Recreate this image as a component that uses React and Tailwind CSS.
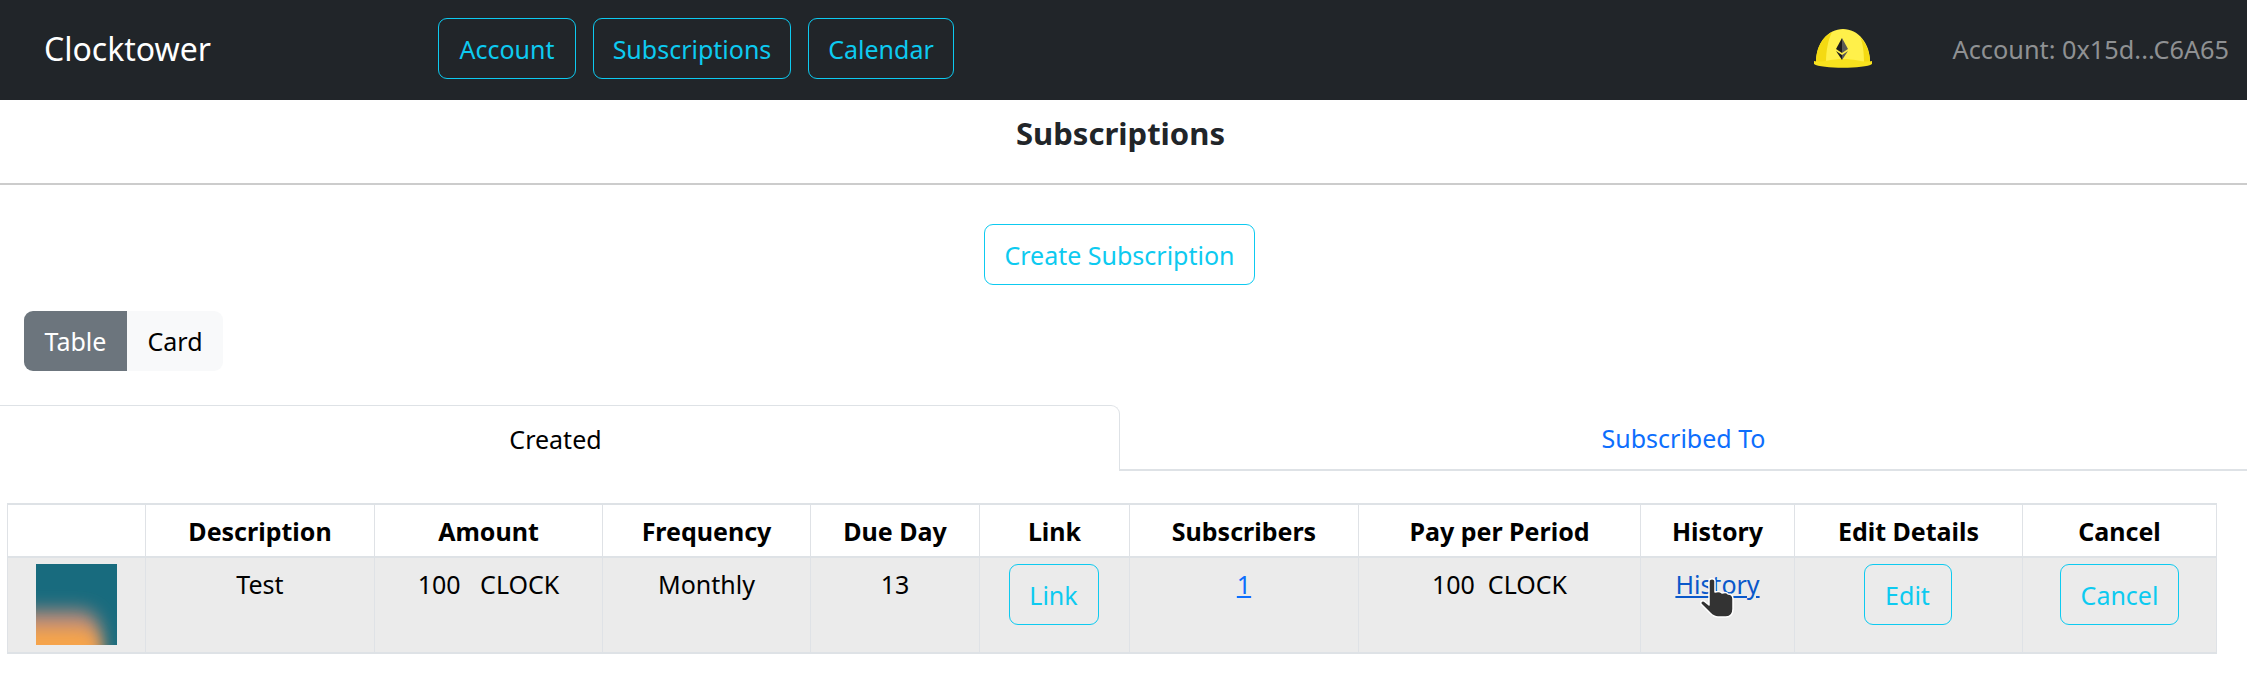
const cyanBtn = 'inline-flex items-center justify-center h-[61px] rounded-[9px] border border-[#0dcaf0] text-[#0dcaf0] text-[25px]';
const cell = 'border-x border-y-2 border-x-[#dfe2e6] border-y-[#dee2e6]';
const textCell = cell + ' pt-[8px]';
const btnCell = cell + ' pt-[6px]';

function Helmet() {
  return (
    <svg width="60" height="40" viewBox="0 0 60 40" className="shrink-0">
      <path d="M3 33 C3 14 15 0 30 0 C45 0 57 14 57 33 Z" fill="#fff04a" />
      <path d="M3 33 C3 19 9 8 19 3 C15 11 13 22 13 33 Z" fill="#f4da12" />
      <path d="M51 33 C51 24 50 14 47 8 C53 14 57 23 57 33 Z" fill="#f4da12" />
      <path d="M1 32 C10 34 16 30 30 30 C44 30 50 34 59 32 L59 35 C52 40 8 40 1 35 Z" fill="#f8e21e" />
      <path d="M29 9 L23 20 L29 24 Z" fill="#1c1c1c" />
      <path d="M29 9 L35 20 L29 24 Z" fill="#5b5b55" />
      <path d="M23 22 L29 26 L29 31 Z" fill="#1c1c1c" />
      <path d="M35 22 L29 26 L29 31 Z" fill="#5b5b55" />
    </svg>
  );
}

function Thumb() {
  return (
    <svg width="81" height="81" viewBox="0 0 81 81" className="block ml-[28px]">
      <defs>
        <filter id="soft" x="-40%" y="-40%" width="180%" height="180%">
          <feGaussianBlur stdDeviation="9" />
        </filter>
        <filter id="softer" x="-40%" y="-40%" width="180%" height="180%">
          <feGaussianBlur stdDeviation="8" />
        </filter>
        <clipPath id="box"><rect width="81" height="81" /></clipPath>
      </defs>
      <g clipPath="url(#box)">
        <rect width="81" height="81" fill="#186b7e" />
        <rect x="-30" y="46" width="94" height="60" rx="20" fill="#b98a7c" filter="url(#soft)" />
        <rect x="-30" y="64" width="94" height="45" rx="18" fill="#f6a44c" filter="url(#softer)" />
      </g>
    </svg>
  );
}

function HandCursor() {
  return (
    <svg width="36" height="42" viewBox="0 0 36 42" className="absolute left-[58px] top-[11px]">
      <path d="M10 4 C10 1 16 1 16 4 L16 15 C19 14 21 14 23 16 C26 15 28 15 29 17 C32 17 34 19 34 22 L34 32 C34 37 31 40 27 40 L19 40 C15 40 13 38 11 36 L2 27 C1 25 3 23 5 24 L10 28 Z" fill="#333" stroke="#fff" strokeWidth="1.5" strokeLinejoin="round" />
    </svg>
  );
}

const headers = ['', 'Description', 'Amount', 'Frequency', 'Due Day', 'Link', 'Subscribers', 'Pay per Period', 'History', 'Edit Details', 'Cancel'];
const widths = [138, 229, 228, 208, 169, 150, 229, 282, 154, 228, 194];

export default function App() {
  return (
    <div className="bg-white min-h-[686px] overflow-hidden text-black font-['Noto_Sans',sans-serif] text-[25px] leading-[36px]">
      <nav className="h-[100px] pb-[3px] bg-[#212529] flex items-center">
        <a className="w-[438px] pl-[44px] text-[32px] text-white">Clocktower</a>
        <div className="flex gap-[17px]">
          <a className={cyanBtn + ' w-[138px]'}>Account</a>
          <a className={cyanBtn + ' w-[198px]'}>Subscriptions</a>
          <a className={cyanBtn + ' w-[146px]'}>Calendar</a>
        </div>
        <div className="ml-auto flex items-center gap-[80px] pr-[18px]">
          <Helmet />
          <span className="text-[25.3px] text-[#8f9193]">Account: 0x15d...C6A65</span>
        </div>
      </nav>

      <h1 className="h-[85px] pt-[15px] pr-[6px] text-center text-[31px] font-bold text-[#212529] border-b-2 border-[#cccccc]">Subscriptions</h1>

      <div className="flex justify-center pt-[39px] pr-[8px]">
        <button className={cyanBtn + ' w-[271px]'}>Create Subscription</button>
      </div>

      <div className="flex pl-[24px] pt-[26px]">
        <button className="w-[103px] h-[60px] bg-[#6c757d] text-white rounded-l-[9px]">Table</button>
        <button className="w-[96px] h-[60px] bg-[#f8f9fa] text-black rounded-r-[9px]">Card</button>
      </div>

      <div className="flex mt-[34px] h-[66px]">
        <div className="w-[1120px] shrink-0 pr-[8px] flex items-center justify-center border border-l-0 border-b-0 border-[#dee2e6] rounded-tr-[9px]">Created</div>
        <div className="flex-1 flex items-center justify-center text-[#0d6efd] border-b-2 border-[#dee2e6] mt-[1px]">Subscribed To</div>
      </div>

      <div className="pl-[7px] pt-[32px]">
        <table className="table-fixed border-collapse w-[2209px]">
          <colgroup>
            {widths.map((w, i) => <col key={i} style={{ width: w }} />)}
          </colgroup>
          <thead>
            <tr className="h-[53px]">
              {headers.map((h, i) => (
                <th key={i} className={cell + ' font-bold text-center p-0'}>{h}</th>
              ))}
            </tr>
          </thead>
          <tbody>
            <tr className="h-[96px] bg-[#ebebeb] text-center align-top">
              <td className={btnCell}><Thumb /></td>
              <td className={textCell}>Test</td>
              <td className={textCell}>100&nbsp;&nbsp; CLOCK</td>
              <td className={textCell}>Monthly</td>
              <td className={textCell}>13</td>
              <td className={btnCell + ' pr-[2px]'}><a className={cyanBtn + ' w-[90px]'}>Link</a></td>
              <td className={textCell}><a className="underline text-[#0d6efd]">1</a></td>
              <td className={textCell}>100&nbsp; CLOCK</td>
              <td className={textCell}>
                <div className="relative">
                  <a className="underline text-[#0a58ca]">History</a>
                  <HandCursor />
                </div>
              </td>
              <td className={btnCell + ' pr-[2px]'}><a className={cyanBtn + ' w-[88px]'}>Edit</a></td>
              <td className={btnCell}><a className={cyanBtn + ' w-[119px]'}>Cancel</a></td>
            </tr>
          </tbody>
        </table>
      </div>
    </div>
  );
}
